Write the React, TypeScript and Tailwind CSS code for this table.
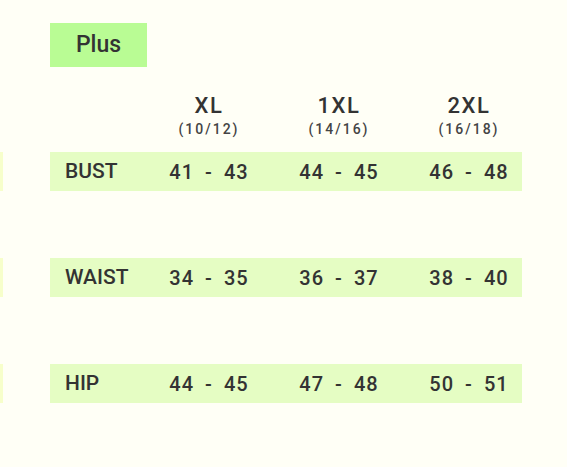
const sizes = [
  { name: "XL", sub: "(10/12)" },
  { name: "1XL", sub: "(14/16)" },
  { name: "2XL", sub: "(16/18)" },
];

const rows = [
  { label: "BUST", values: [["41", "43"], ["44", "45"], ["46", "48"]] },
  { label: "WAIST", values: [["34", "35"], ["36", "37"], ["38", "40"]] },
  { label: "HIP", values: [["44", "45"], ["47", "48"], ["50", "51"]] },
];

export default function App() {
  return (
    <div className="flex h-[467px] w-[588px] overflow-hidden bg-white font-['Roboto',sans-serif]">
      <div className="flex w-[567px] flex-col bg-[#fffff6] pt-[23px] text-[#333]">
        {/* Size group tag */}
        <div className="ml-[50px] flex h-[44px] w-[97px] items-center justify-center bg-[#b9fc94] text-[23px] font-medium">
          Plus
        </div>

        {/* Column headers */}
        <div className="ml-[50px] mt-[26px] grid grid-cols-[94px_130px_130px_130px]">
          <div />
          {sizes.map((s) => (
            <div key={s.name} className="flex flex-col items-center">
              <span className="text-[22px] leading-[26px] tracking-[1.5px] font-medium">{s.name}</span>
              <span className="mt-[2px] text-[14px] leading-[16px] tracking-[2px] font-medium text-[#444]">
                {s.sub}
              </span>
            </div>
          ))}
        </div>

        {/* Measurement rows */}
        <div className="mt-[15px] flex flex-col gap-[67px]">
          {rows.map((r) => (
            <div key={r.label} className="flex h-[39px] items-stretch">
              <div className="w-[3px] bg-[#f7ffcb]" />
              <div className="ml-[47px] grid w-[472px] grid-cols-[94px_130px_130px_130px] items-center overflow-hidden bg-[#e5fdc3] font-medium">
                <span className="pl-[15px] text-[21px]">{r.label}</span>
                {r.values.map(([lo, hi], i) => (
                  <span key={i} className="flex justify-center gap-[11px] text-[20px] tracking-[1px]">
                    <span>{lo}</span>
                    <span>-</span>
                    <span>{hi}</span>
                  </span>
                ))}
              </div>
            </div>
          ))}
        </div>
      </div>
      <div className="flex-1 bg-white" />
    </div>
  );
}
